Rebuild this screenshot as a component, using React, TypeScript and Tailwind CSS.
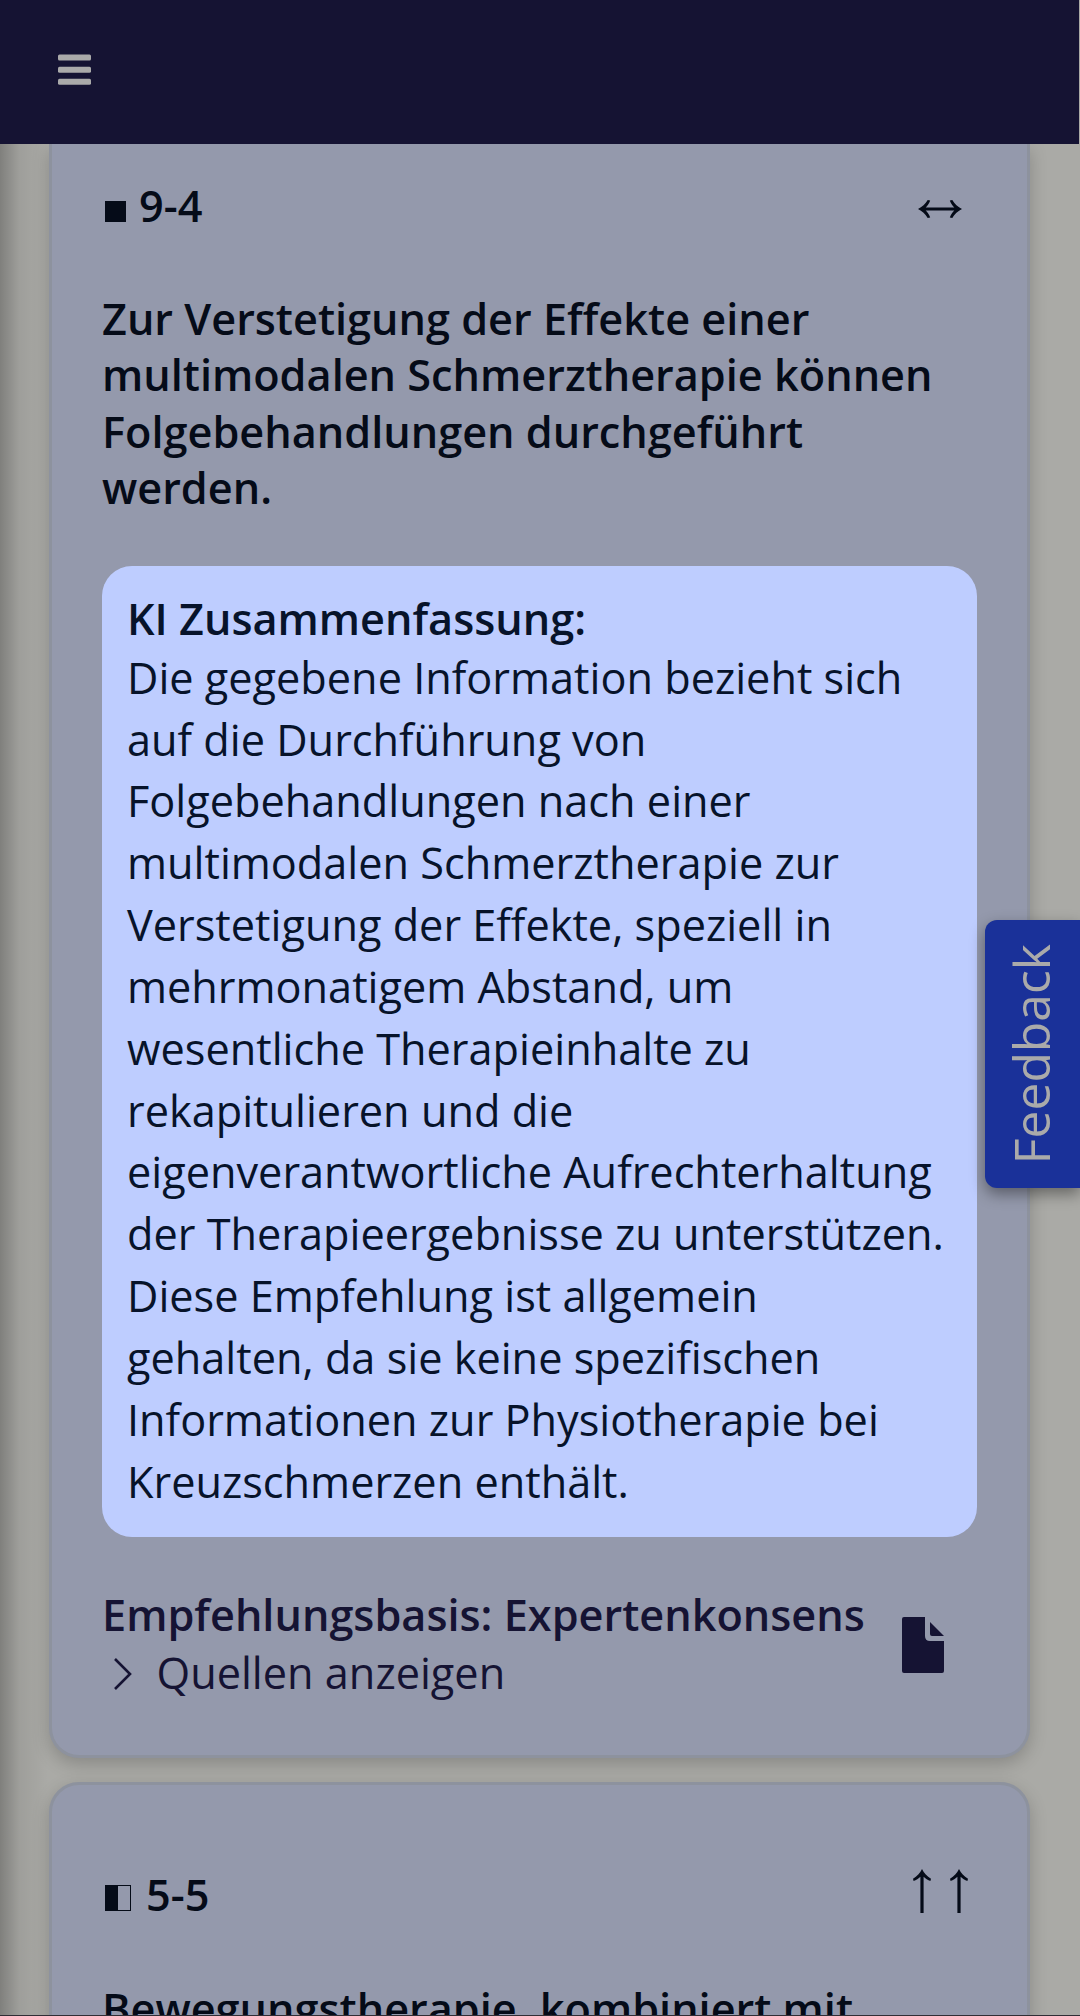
import type { ReactNode } from "react";

const summaryLines = [
  "Die gegebene Information bezieht sich",
  "auf die Durchführung von",
  "Folgebehandlungen nach einer",
  "multimodalen Schmerztherapie zur",
  "Verstetigung der Effekte, speziell in",
  "mehrmonatigem Abstand, um",
  "wesentliche Therapieinhalte zu",
  "rekapitulieren und die",
  "eigenverantwortliche Aufrechterhaltung",
  "der Therapieergebnisse zu unterstützen.",
  "Diese Empfehlung ist allgemein",
  "gehalten, da sie keine spezifischen",
  "Informationen zur Physiotherapie bei",
  "Kreuzschmerzen enthält.",
];

const headingLines = [
  "Zur Verstetigung der Effekte einer",
  "multimodalen Schmerztherapie können",
  "Folgebehandlungen durchgeführt",
  "werden.",
];

function Lines({ items }: { items: string[] }) {
  return (
    <>
      {items.map((line) => (
        <span key={line} className="block whitespace-nowrap">
          {line}
        </span>
      ))}
    </>
  );
}

function Card({ className, children }: { className: string; children: ReactNode }) {
  return (
    <article
      className={`ml-[49px] w-[981px] shrink-0 border-[3px] border-[#8d929e] bg-[#9499ac] px-[50px] shadow-[0_6px_18px_rgba(0,0,0,0.2)] ${className}`}
    >
      {children}
    </article>
  );
}

function UpArrow() {
  return (
    <svg width="18" height="44" viewBox="0 0 18 44" fill="currentColor">
      <path d="M9 0C11 4 14 7.5 18 9.7L17.4 12C14.8 11 12.4 9.5 10.6 7.7V44H7.4V7.7C5.6 9.5 3.2 11 .6 12L0 9.7C4 7.5 7 4 9 0Z" />
    </svg>
  );
}

export default function App() {
  return (
    <div className="relative flex h-[2016px] w-[1080px] flex-col overflow-hidden bg-[#aaaaa6] font-['Open_Sans',sans-serif] text-[43.26px] leading-[56.4px] text-[#050b18]">
      <header className="z-10 flex h-36 w-[1079px] shrink-0 items-start bg-[#151333] pt-[54px] pl-[57.7px]">
        <svg width="33" height="31" viewBox="0 0 33 31" fill="#aaaaaa">
          <rect y="0.5" width="33" height="6" rx="1.5" />
          <rect y="12.8" width="33" height="6" rx="1.5" />
          <rect y="24.8" width="33" height="6" rx="1.5" />
        </svg>
      </header>

      <main className="flex flex-col">
        <Card className="h-[1614px] rounded-b-[30px] border-t-0">
          <div className="flex h-[147px] items-start justify-between pt-[34px] font-semibold">
            <div className="flex items-start">
              <span className="mt-[23px] ml-[3px] h-[21px] w-[21px] bg-[#050b18]" />
              <span className="ml-[13px]">9-4</span>
            </div>
            <svg className="mt-[21.5px] mr-[15px]" width="44" height="18" viewBox="0 0 44 18" fill="currentColor">
              <path d="M0 9C4 7 7.5 4 9.7 0L12.2.4C11.2 3 9.7 5.6 7.7 7.4H36.3C34.3 5.6 32.8 3 31.8.4L34.3 0C36.5 4 40 7 44 9C40 11 36.5 14 34.3 18L31.8 17.6C32.8 15 34.3 12.4 36.3 10.6H7.7C9.7 12.4 11.2 15 12.2 17.6L9.7 18C7.5 14 4 11 0 9Z" />
            </svg>
          </div>
          <h2 className="h-[275px] font-semibold">
            <Lines items={headingLines} />
          </h2>
          <section className="h-[971px] w-[875px] rounded-[30px] bg-[#becdff] px-[25px] pt-[25px] text-[#07132a]">
            <h3 className="h-[55.8px] font-semibold">KI Zusammenfassung:</h3>
            <p className="leading-[61.83px]">
              <Lines items={summaryLines} />
            </p>
          </section>
          <footer className="flex items-start justify-between pt-[50px] text-[#151333]">
            <div>
              <p className="font-semibold whitespace-nowrap">Empfehlungsbasis: Expertenkonsens</p>
              <div className="mt-[2px] flex items-center">
                <svg className="mt-[1px] ml-[12px]" width="18" height="32" viewBox="0 0 18 32" fill="none" stroke="currentColor" strokeWidth="2.6">
                  <path d="M1 1L16 16L1 31" />
                </svg>
                <span className="ml-[24.5px]">Quellen anzeigen</span>
              </div>
            </div>
            <svg className="mt-[30px] mr-[33.5px]" width="42" height="56" viewBox="0 0 42 56" fill="currentColor">
              <path d="M2 0H23V19Q23 24 28 24H42V54Q42 56 40 56H2Q0 56 0 54V2Q0 0 2 0Z" />
              <path d="M28 5L42 19H30Q28 19 28 17Z" />
            </svg>
          </footer>
        </Card>

        <Card className="mt-6 h-[500px] rounded-[30px]">
          <div className="mt-[82px] flex h-[114px] w-full items-start justify-between font-semibold">
            <div className="flex items-start">
              <span className="mt-[18px] ml-[3px] flex h-[26px] w-[26px] border border-[#050b18]">
                <span className="w-[12px] bg-[#050b18]" />
              </span>
              <span className="ml-[15px]">5-5</span>
            </div>
            <div className="mt-[2px] mr-[9px] flex gap-[19px]">
              <UpArrow />
              <UpArrow />
            </div>
          </div>
          <h2 className="font-semibold whitespace-nowrap">Bewegungstherapie, kombiniert mit</h2>
        </Card>
      </main>

      <div className="absolute top-36 left-0 h-[1872px] w-[48px] bg-linear-to-r from-black/25 via-black/7 via-40% to-transparent" />
      <button className="absolute top-[920px] right-0 flex h-[268px] w-[95px] items-center justify-center rounded-l-[12px] bg-[#1a3199] pr-[3px] text-[#aaaaaa] shadow-[0_6px_15px_rgba(0,0,0,0.4)]">
        <span className="rotate-180 text-[49.8px] leading-[60px] [writing-mode:vertical-rl]">Feedback</span>
      </button>
      <div className="absolute bottom-0 left-0 z-20 h-px w-full bg-[#302d35]" />
    </div>
  );
}
